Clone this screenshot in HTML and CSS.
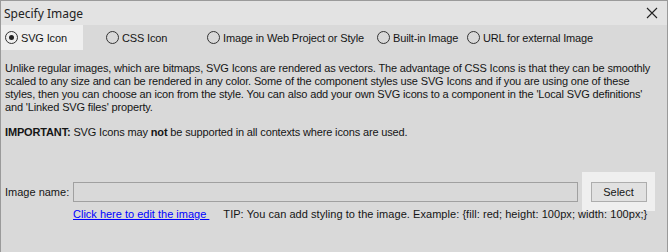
FILE: index.html
```html
<!DOCTYPE html>
<html>
<head>
<meta charset="utf-8">
<link rel="stylesheet" href="styles.css">
</head>
<body>
<div class="win">
  <div class="titlebar">
    <span class="title">Specify Image</span>
    <svg class="close" width="12" height="12" viewBox="0 0 12 12"><path d="M1 1 L11 11 M11 1 L1 11" stroke="#222" stroke-width="1.1" fill="none"/></svg>
  </div>
  <div class="content">
    <div class="radios">
      <label class="radio sel"><span class="dot on"></span>SVG Icon</label>
      <label class="radio r2"><span class="dot"></span>CSS Icon</label>
      <label class="radio r3"><span class="dot"></span>Image in Web Project or Style</label>
      <label class="radio r4"><span class="dot"></span>Built-in Image</label>
      <label class="radio r5"><span class="dot"></span>URL for external Image</label>
    </div>
    <p class="desc">Unlike regular images, which are bitmaps, SVG Icons are rendered as vectors. The advantage of CSS Icons is that they can be smoothly<br>scaled to any size and can be rendered in any color. Some of the component styles use SVG Icons and if you are using one of these<br>styles, then you can choose an icon from the style. You can also add your own SVG icons to a component in the 'Local SVG definitions'<br>and 'Linked SVG files' property.</p>
    <p class="important"><b>IMPORTANT:</b> SVG Icons may <b>not</b> be supported in all contexts where icons are used.</p>
    <div class="namerow">
      <span class="label">Image name:</span>
      <div class="input"></div>
      <div class="btnwrap"><div class="btn">Select</div></div>
    </div>
    <div class="linkrow">
      <a class="link">Click here to edit the image&nbsp;</a>
      <span class="tip">TIP: You can add styling to the image. Example: {fill: red; height: 100px; width: 100px;}</span>
    </div>
  </div>
</div>
</body>
</html>
```
FILE: styles.css
```css
html, body { margin: 0; padding: 0; }
body { width: 668px; height: 252px; overflow: hidden; background: #d9d9d9; }
.win {
  width: 668px; height: 252px; box-sizing: border-box;
  border: 1px solid #9a9a9a; border-bottom: none;
  background: #d9d9d9;
  font-family: "Liberation Sans", Arial, sans-serif; font-size: 11px; color: #151515;
  letter-spacing: -0.15px;
}
.titlebar {
  height: 24px; background: #e3e3e3;
  display: flex; align-items: center; justify-content: space-between;
  padding: 0 9px 0 3px;
  letter-spacing: 0;
}
.title { font-family: "Noto Sans", sans-serif; font-size: 12px; color: #222; }
.close { display: block; }
.radios { display: flex; align-items: center; height: 25px; }
.radio { display: flex; align-items: center; height: 25px; white-space: nowrap; flex: none; }
.radio.sel { background: #efefef; width: 82px; padding-left: 4px; box-sizing: border-box; }
.r2 { margin-left: 23px; width: 101px; }
.r3 { width: 170px; }
.r4 { width: 90px; }
.dot {
  width: 11px; height: 11px; border: 1px solid #333; border-radius: 50%;
  margin-right: 3px; box-sizing: content-box; position: relative; flex: none;
}
.dot.on::after {
  content: ""; position: absolute; left: 3px; top: 3px; width: 5px; height: 5px; border-radius: 50%; background: #222;
}
.desc { margin: 12px 0 0 4px; line-height: 13px; white-space: nowrap; }
.important { margin: 12px 0 0 4px; line-height: 13px; }
.namerow { display: flex; align-items: center; margin-top: 33px; height: 39px; }
.label { width: 68px; padding-left: 4px; flex: none; letter-spacing: 0; }
.input { width: 503px; height: 18px; border: 1px solid #a0a0a0; flex: none; }
.btnwrap { margin-left: 4px; width: 73px; height: 39px; background: #efefef; display: flex; align-items: center; justify-content: center; flex: none; }
.btn { width: 54px; height: 18px; border: 1px solid #adadad; background: #e1e1e1; display: flex; align-items: center; justify-content: center; letter-spacing: 0; }
.linkrow { display: flex; padding-left: 72px; margin-top: -3px; white-space: nowrap; }
.link { color: #0000ff; text-decoration: underline; letter-spacing: 0; }
.tip { margin-left: 14px; letter-spacing: 0.05px; }
```
